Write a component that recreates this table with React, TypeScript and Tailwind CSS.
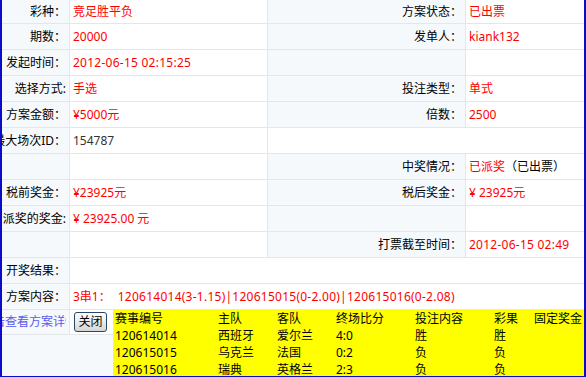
import type { ReactNode } from 'react';

const LABEL = 'bg-[#f5f9fc] flex items-center justify-end pr-[3px] whitespace-nowrap overflow-hidden border-r border-b border-[#e3e7ec]';
const VALUE = 'bg-white flex items-center pl-[3px] whitespace-nowrap overflow-hidden border-b border-[#e3e7ec]';

function Label({ children }: { children?: ReactNode }) {
  return <div className={LABEL}>{children && <span className="shrink-0">{children}</span>}</div>;
}

function Value({ children, span, last }: { children?: ReactNode; span?: string; last?: boolean }) {
  return (
    <div className={`${VALUE} ${last ? '' : 'border-r'} ${span ?? ''}`}>
      {children}
    </div>
  );
}

const red = 'text-[#ff0000]';
// dates and bet strings run a little wider in the original font
const wide = 'tracking-[0.25px]';

const matches = [
  ['120614014', '西班牙', '爱尔兰', '4:0', '胜', '胜', ''],
  ['120615015', '乌克兰', '法国', '0:2', '负', '负', ''],
  ['120615016', '瑞典', '英格兰', '2:3', '负', '负', ''],
];

export default function App() {
  return (
    <div
      className="relative w-[586px] h-[377px] overflow-hidden bg-[#f5f9fc] border-l-2 border-r-2 border-b border-[#0c0cc8] text-[12px] text-black"
      style={{ fontFamily: '"Noto Sans", "Noto Sans CJK SC", sans-serif' }}
    >
      <div className="grid grid-cols-[68px_198px_198px_118px] grid-rows-[24px] auto-rows-[26px]">
        <Label>彩种：</Label>
        <Value><span className={red}>竞足胜平负</span></Value>
        <Label>方案状态：</Label>
        <Value last><span className={red}>已出票</span></Value>

        <Label>期数：</Label>
        <Value><span className={red}>20000</span></Value>
        <Label>发单人：</Label>
        <Value last><span className={red}>kiank132</span></Value>

        <Label>发起时间：</Label>
        <Value><span className={`${red} ${wide}`}>2012-06-15 02:15:25</span></Value>
        <Label />
        <Value last />

        <Label>选择方式:</Label>
        <Value><span className={red}>手选</span></Value>
        <Label>投注类型：</Label>
        <Value last><span className={red}>单式</span></Value>

        <Label>方案金额：</Label>
        <Value><span className={red}>¥5000元</span></Value>
        <Label>倍数：</Label>
        <Value last><span className={red}>2500</span></Value>

        <Label>最大场次ID：</Label>
        <Value><span className="text-[#333]">154787</span></Value>
        <Value span="col-span-2" last />

        <Label />
        <Value />
        <Label>中奖情况：</Label>
        <Value last>
          <span className={red}>已派奖</span>
          <span>（已出票）</span>
        </Value>

        <Label>税前奖金：</Label>
        <Value><span className={red}>¥23925元</span></Value>
        <Label>税后奖金：</Label>
        <Value last><span className={red}>¥ 23925元</span></Value>

        <Label>派奖的奖金:</Label>
        <Value><span className={red}>¥ 23925.00 元</span></Value>
        <Label />
        <Value last />

        <Label />
        <Value />
        <Label>打票截至时间：</Label>
        <Value last><span className={`${red} ${wide}`}>2012-06-15 02:49</span></Value>

        <Label>开奖结果：</Label>
        <Value span="col-span-3" last />

        <Label>方案内容：</Label>
        <Value span="col-span-3" last>
          <span className={red}>3串1：</span>
          <span className={`${red} ${wide} ml-[7px]`}>120614014(3-1.15)|120615015(0-2.00)|120615016(0-2.08)</span>
        </Value>

        <div className="h-[25px] bg-[#f5f9fc] flex items-center border-r border-b border-[#e3e7ec]">
          <div className="w-[64px] overflow-hidden whitespace-nowrap flex">
            <a className="shrink-0 -ml-[21px] text-[#5a5af0] cursor-pointer">点击查看方案详情</a>
          </div>
        </div>
        <div className="h-[25px] bg-white col-span-3 border-b border-[#e3e7ec]" />
      </div>

      {/* detail popup opened by the link */}
      <div className="absolute top-[310px] left-[72px] right-0 flex items-start">
        <button className="mt-[2px] w-[33px] h-[20px] rounded-[3px] border border-[#24486a] bg-gradient-to-b from-white to-[#d6d6d6] text-[12px] leading-none text-black">
          关闭
        </button>
        <div className="ml-[6px] flex-1 bg-[#ffff00] pl-[2px] pb-[4px]">
          <div className="grid grid-cols-[103px_59px_59px_79px_79px_40px_1fr] leading-[17px] whitespace-nowrap">
            {['赛事编号', '主队', '客队', '终场比分', '投注内容', '彩果', '固定奖金'].map((h) => (
              <div key={h}>{h}</div>
            ))}
            {matches.map((m) =>
              m.map((c, i) => <div key={m[0] + i}>{c}</div>)
            )}
          </div>
        </div>
      </div>
    </div>
  );
}
